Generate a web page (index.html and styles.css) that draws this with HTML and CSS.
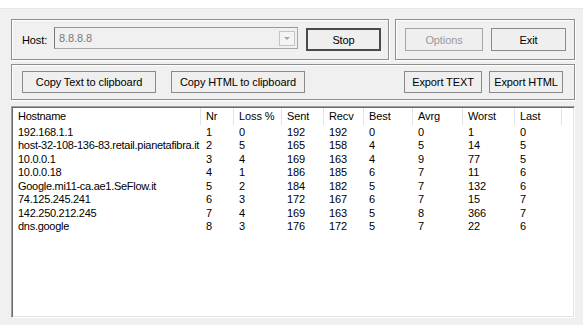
FILE: index.html
```html
<!DOCTYPE html>
<html lang="en">
<head>
    <meta charset="UTF-8">
    <title>WinMTR</title>
    <link rel="stylesheet" href="styles.css">
</head>
<body>
    <div class="topstrip"></div>

    <div class="toprow">
        <div class="group host-group">
            <label class="host-label" for="host">Host:</label>
            <div class="combo">
                <span class="combo-text" id="host">8.8.8.8</span>
                <span class="combo-arrow"></span>
            </div>
            <button class="btn btn-default stop-btn">Stop</button>
        </div>
        <div class="group app-group">
            <button class="btn options-btn" disabled>Options</button>
            <button class="btn exit-btn">Exit</button>
        </div>
    </div>

    <div class="group export-group">
        <button class="btn copy-btn">Copy Text to clipboard</button>
        <button class="btn copy-btn copy-html">Copy HTML to clipboard</button>
        <div class="spacer"></div>
        <button class="btn export-text">Export TEXT</button>
        <button class="btn export-html">Export HTML</button>
    </div>

    <div class="listview">
        <div class="row head">
            <div class="cell">Hostname</div>
            <div class="cell">Nr</div>
            <div class="cell">Loss %</div>
            <div class="cell">Sent</div>
            <div class="cell">Recv</div>
            <div class="cell">Best</div>
            <div class="cell">Avrg</div>
            <div class="cell">Worst</div>
            <div class="cell">Last</div>
            <div class="cell filler"></div>
        </div>
        <div class="row"><div>192.168.1.1</div><div>1</div><div>0</div><div>192</div><div>192</div><div>0</div><div>0</div><div>1</div><div>0</div></div>
        <div class="row"><div>host-32-108-136-83.retail.pianetafibra.it</div><div>2</div><div>5</div><div>165</div><div>158</div><div>4</div><div>5</div><div>14</div><div>5</div></div>
        <div class="row"><div>10.0.0.1</div><div>3</div><div>4</div><div>169</div><div>163</div><div>4</div><div>9</div><div>77</div><div>5</div></div>
        <div class="row"><div>10.0.0.18</div><div>4</div><div>1</div><div>186</div><div>185</div><div>6</div><div>7</div><div>11</div><div>6</div></div>
        <div class="row"><div>Google.mi11-ca.ae1.SeFlow.it</div><div>5</div><div>2</div><div>184</div><div>182</div><div>5</div><div>7</div><div>132</div><div>6</div></div>
        <div class="row"><div>74.125.245.241</div><div>6</div><div>3</div><div>172</div><div>167</div><div>6</div><div>7</div><div>15</div><div>7</div></div>
        <div class="row"><div>142.250.212.245</div><div>7</div><div>4</div><div>169</div><div>163</div><div>5</div><div>8</div><div>366</div><div>7</div></div>
        <div class="row"><div>dns.google</div><div>8</div><div>3</div><div>176</div><div>172</div><div>5</div><div>7</div><div>22</div><div>6</div></div>
    </div>
</body>
</html>
```

FILE: styles.css
```css
* {
    margin: 0;
    padding: 0;
    box-sizing: border-box;
}

body {
    background: #f0f0f0;
    font-family: 'Liberation Sans', Arial, sans-serif;
    font-size: 11px;
    letter-spacing: -0.1px;
    color: #000;
    width: 583px;
    height: 325px;
    overflow: hidden;
}

.topstrip {
    height: 9px;
    background: #fff;
    border-bottom: 1px solid #e6e6e6;
}

/* group boxes */
.group {
    border: 1px solid #8e8e8e;
    box-shadow: inset 1px 1px 0 #fff, 1px 1px 0 #fff;
    display: flex;
    align-items: center;
}

.toprow {
    display: flex;
    gap: 6px;
    margin: 10px 0 0 11px;
}

.host-group {
    width: 378px;
    height: 41px;
    padding-left: 10px;
}

.host-label {
    width: 32px;
}

.combo {
    width: 244px;
    height: 22px;
    margin-top: -3px;
    border: 1px solid #a8a8a8;
    border-left-color: #777;
    border-top-color: #999;
    background: #f0f0f0;
    display: flex;
    align-items: center;
    padding: 0 2px 0 4px;
}

.combo-text {
    flex: 1;
    color: #7a7a7a;
}

.combo-arrow {
    width: 16px;
    height: 15px;
    border: 1px solid #c4c4c4;
    background: #f4f4f4;
    position: relative;
}

.combo-arrow::after {
    content: "";
    position: absolute;
    left: 4px;
    top: 5px;
    border-left: 3px solid transparent;
    border-right: 3px solid transparent;
    border-top: 3px solid #a8a8a8;
}

.app-group {
    width: 180px;
    height: 41px;
    padding-left: 9px;
    gap: 8px;
}

.export-group {
    width: 564px;
    height: 36px;
    margin: 4px 0 0 11px;
    padding: 0 10px;
}

.spacer {
    flex: 1;
}

/* buttons */
.btn {
    font-family: inherit;
    font-size: inherit;
    letter-spacing: inherit;
    color: #000;
    background: #efefef;
    border: 1px solid #8a8a8a;
    height: 22px;
}

.btn-default {
    border: 2px solid #4a4a4a;
}

.stop-btn {
    width: 75px;
    height: 23px;
    margin-left: 8px;
}

.options-btn {
    width: 78px;
    height: 23px;
    color: #9a9a9a;
    border-color: #a6a6a6;
}

.exit-btn {
    width: 75px;
    height: 23px;
}

.copy-btn {
    width: 134px;
}

.copy-html {
    margin-left: 15px;
}

.export-text {
    width: 78px;
    margin-right: 7px;
}

.export-html {
    width: 74px;
    margin-right: 1px;
}

/* list view */
.listview {
    width: 564px;
    height: 212px;
    margin: 6px 0 0 11px;
    background: #fff;
    border: 1px solid;
    border-color: #a0a0a0 #fff #fff #a0a0a0;
    box-shadow: inset 1px 1px 0 #696969, inset -1px -1px 0 #e3e3e3;
    padding: 1px 0 0 1px;
}

.row {
    display: grid;
    grid-template-columns: 188px 33px 48px 42px 40px 49px 50px 52px 47px 1fr;
    height: 13.43px;
    line-height: 13.43px;
    white-space: nowrap;
}

.row > div {
    padding-left: 5px;
    overflow: hidden;
}

.row > div:first-child {
    letter-spacing: -0.28px;
}

.row.head {
    height: 17px;
    line-height: 17px;
    margin-bottom: 1px;
}

.head .cell {
    border-right: 1px solid #e3e3e3;
}

.head .filler {
    border-right: none;
}
```
